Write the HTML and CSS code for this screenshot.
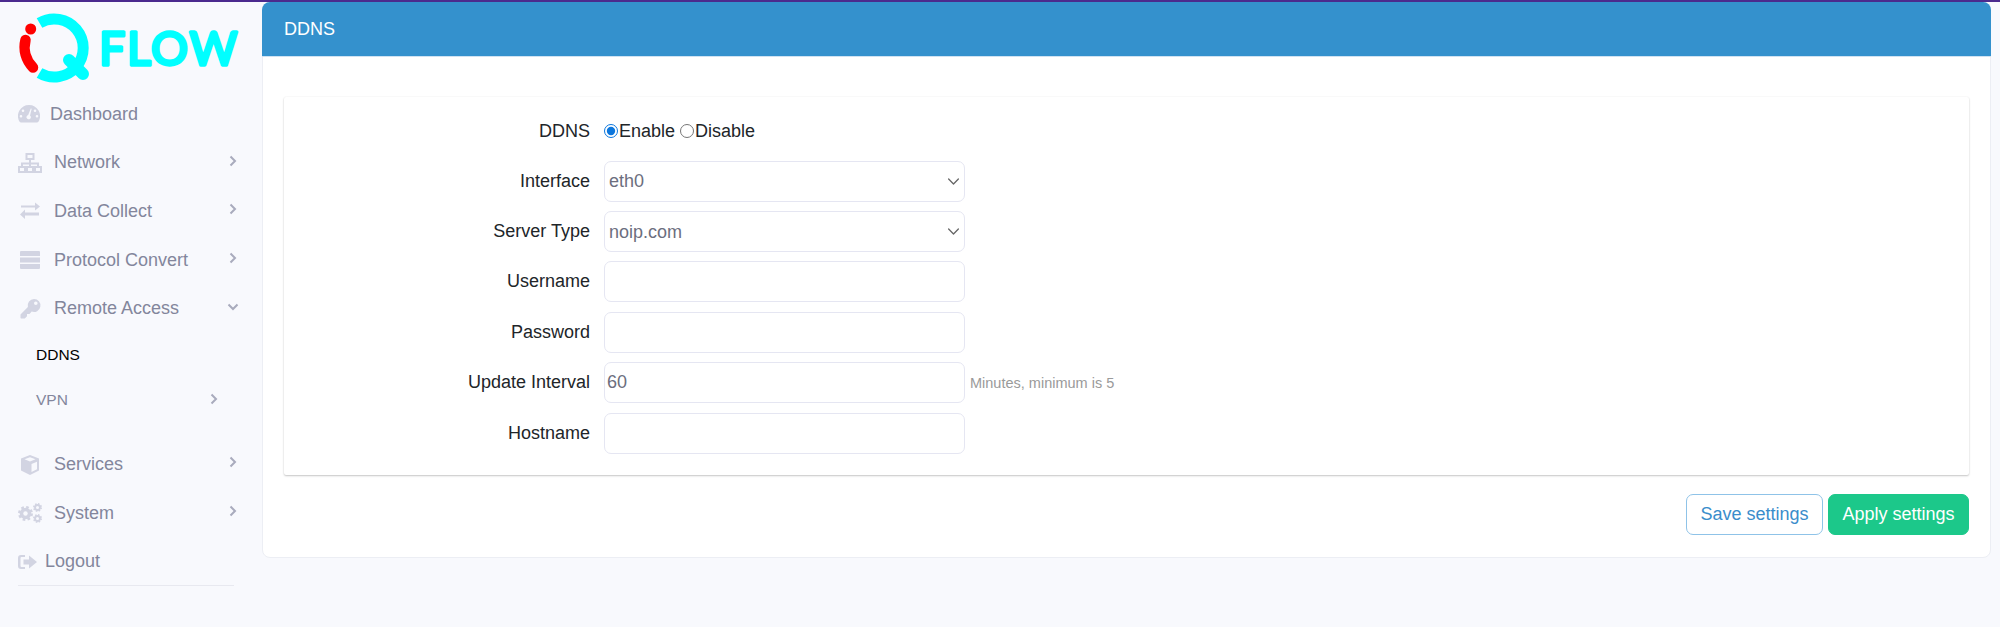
FILE: index.html
```html
<!DOCTYPE html>
<html lang="en">
<head>
<meta charset="utf-8">
<title>DDNS</title>
<link rel="stylesheet" href="styles.css">
</head>
<body>
<div class="app">
  <aside class="sidebar">
    <div class="logo">
      <svg width="262" height="90" viewBox="0 0 262 90">
        <path d="M39.500 23 A29 29 0 1 1 39.500 73" fill="none" stroke="#00ffff" stroke-width="11"/>
        <path d="M69 60 L83 74" fill="none" stroke="#00ffff" stroke-width="12" stroke-linecap="round"/>
        <path d="M25.500 40 A29 29 0 0 0 33 67.500" fill="none" stroke="#ff0000" stroke-width="10.500" stroke-linecap="round"/>
        <circle cx="30.700" cy="29" r="5.500" fill="#ff0000"/>
        <text x="99" y="64.500" class="logo-word">FLOW</text>
      </svg>
    </div>
    <nav class="menu">
      <a class="item item-flat">
        <svg class="ico ico-dash" viewBox="0 0 22 20"><path d="M11 1a11 11 0 0 0-9.400 16.700c.3.500.8.800 1.400.8h16c.6 0 1.100-.3 1.400-.8A11 11 0 0 0 11 1Zm1.800 3.400 .9.300-1.700 6.700a2.200 2.200 0 1 1-1.800-.4ZM5 5.500a1.300 1.300 0 1 1 0 2.600 1.300 1.300 0 0 1 0-2.600ZM3 11a1.300 1.300 0 1 1 0 2.600A1.300 1.300 0 0 1 3 11Zm16 0a1.300 1.300 0 1 1 0 2.600 1.300 1.300 0 0 1 0-2.600Zm-2-5.500a1.300 1.300 0 1 1 0 2.600 1.300 1.300 0 0 1 0-2.600Z" fill-rule="evenodd"/></svg>
        <span class="item-text">Dashboard</span>
      </a>
      <a class="item">
        <svg class="ico" viewBox="0 0 24 20"><path d="M7.500 0h9v7H13v2.500h8V13h3v7h-8v-7h3v-1.500h-6V13h3v7H8v-7h3v-1.500H5V13h3v7H0v-7h3V9.500h8V7H7.500ZM9.500 2v3h5V2ZM2 15v3h4v-3Zm8 0v3h4v-3Zm8 0v3h4v-3Z" fill-rule="evenodd"/></svg>
        <span class="item-text">Network</span>
        <svg class="chev" viewBox="0 0 8 12"><path d="M1.500 1.500 6 6l-4.500 4.500"/></svg>
      </a>
      <a class="item">
        <svg class="ico" viewBox="0 0 24 20"><path d="M3 4.500h14V1.500l5 4-5 4v-3H3ZM21 11.500H7v-3l-5 5 5 4.500v-3.500h14Z"/></svg>
        <span class="item-text">Data Collect</span>
        <svg class="chev" viewBox="0 0 8 12"><path d="M1.500 1.500 6 6l-4.500 4.500"/></svg>
      </a>
      <a class="item">
        <svg class="ico" viewBox="0 0 24 20"><path d="M3 1h18a1 1 0 0 1 1 1v4H2V2a1 1 0 0 1 1-1Zm-1 6.500h20v5H2Zm0 6.500h20v4a1 1 0 0 1-1 1H3a1 1 0 0 1-1-1Z"/></svg>
        <span class="item-text">Protocol Convert</span>
        <svg class="chev" viewBox="0 0 8 12"><path d="M1.500 1.500 6 6l-4.500 4.500"/></svg>
      </a>
      <a class="item">
        <svg class="ico" viewBox="0 0 24 20"><path d="M16 0a6.500 6.500 0 1 1-2.300 12.600L11.500 15H9v2.300L6.800 19.500H3l-.5-.5v-3.500l7.400-7.400A6.500 6.500 0 0 1 16 0Zm1.800 2.500a1.800 1.800 0 1 0 0 3.600 1.800 1.800 0 0 0 0-3.600Z" fill-rule="evenodd"/></svg>
        <span class="item-text">Remote Access</span>
        <svg class="chev chev-down" viewBox="0 0 12 8"><path d="M1.500 1.500 6 6l4.500-4.500"/></svg>
      </a>
      <div class="submenu">
        <a class="sub sub-active"><span>DDNS</span></a>
        <a class="sub"><span>VPN</span><svg class="chev" viewBox="0 0 8 12"><path d="M1.500 1.500 6 6l-4.500 4.500"/></svg></a>
      </div>
      <a class="item">
        <svg class="ico" viewBox="0 0 24 20"><path d="M12 0 21 3.500v12L12 20l-9-4.500v-12Zm0 2.200L6.500 4.300 12 6.500l5.500-2.200ZM13.500 9v8l5.500-2.700V6.800Z" fill-rule="evenodd"/></svg>
        <span class="item-text">Services</span>
        <svg class="chev" viewBox="0 0 8 12"><path d="M1.500 1.500 6 6l-4.500 4.500"/></svg>
      </a>
      <a class="item">
        <svg class="ico" viewBox="0 0 24 20">
          <circle class="gear" cx="7.500" cy="10.500" r="6" stroke-width="3" stroke-dasharray="2.500 2.200"/>
          <circle cx="7.500" cy="10.500" r="5.800"/><circle class="hole" cx="7.500" cy="10.500" r="2.200"/>
          <circle class="gear" cx="19.500" cy="4.500" r="3.600" stroke-width="1.800" stroke-dasharray="1.500 1.330"/>
          <circle cx="19.500" cy="4.500" r="3.400"/><circle class="hole" cx="19.500" cy="4.500" r="1.500"/>
          <circle class="gear" cx="19.500" cy="15.500" r="3.600" stroke-width="1.800" stroke-dasharray="1.500 1.330"/>
          <circle cx="19.500" cy="15.500" r="3.400"/><circle class="hole" cx="19.500" cy="15.500" r="1.500"/>
        </svg>
        <span class="item-text">System</span>
        <svg class="chev" viewBox="0 0 8 12"><path d="M1.500 1.500 6 6l-4.500 4.500"/></svg>
      </a>
      <a class="item item-logout">
        <svg class="ico ico-out" viewBox="0 0 19 16"><path d="M3 1h4v2H3.500a1 1 0 0 0-1 1v8a1 1 0 0 0 1 1H7v2H3a3 3 0 0 1-3-3V4a3 3 0 0 1 3-3Zm8 .5L19 8l-8 6.500v-4H5.500v-5H11Z"/></svg>
        <span class="item-text">Logout</span>
      </a>
      <div class="menu-rule"></div>
    </nav>
  </aside>

  <main class="panel">
    <header class="panel-head">DDNS</header>
    <div class="panel-body">
      <form class="form-card">
        <div class="row row-radio">
          <span class="label">DDNS</span>
          <div class="radios">
            <label class="radio"><input type="radio" name="ddns" checked>Enable</label>
            <label class="radio"><input type="radio" name="ddns">Disable</label>
          </div>
        </div>
        <div class="row">
          <label class="label">Interface</label>
          <select class="field"><option>eth0</option></select>
        </div>
        <div class="row">
          <label class="label">Server Type</label>
          <select class="field"><option>noip.com</option></select>
        </div>
        <div class="row">
          <label class="label">Username</label>
          <input class="field" type="text">
        </div>
        <div class="row">
          <label class="label">Password</label>
          <input class="field" type="password">
        </div>
        <div class="row">
          <label class="label">Update Interval</label>
          <input class="field" type="text" value="60">
          <span class="hint">Minutes, minimum is 5</span>
        </div>
        <div class="row">
          <label class="label">Hostname</label>
          <input class="field" type="text">
        </div>
      </form>
      <div class="actions">
        <button class="btn btn-save" type="button">Save settings</button>
        <button class="btn btn-apply" type="button">Apply settings</button>
      </div>
    </div>
  </main>
</div>
</body>
</html>
```

FILE: styles.css
```css
* { box-sizing: border-box; }
html, body { margin: 0; height: 100%; }
body {
  background: #f8f9fd;
  font-family: "Liberation Sans", Arial, sans-serif;
  border-top: 2px solid #4b2a8e;
  overflow: hidden;
}
.app { display: flex; align-items: flex-start; }

.sidebar { width: 262px; flex: none; }
.logo { height: 90px; }
.logo svg { display: block; margin-top: -2px; }
.logo-word { font-family: Lato, sans-serif; font-weight: 400; font-size: 46px; fill: #00ffff; stroke: #00ffff; stroke-width: 3.400px; stroke-linejoin: round; stroke-linecap: round; letter-spacing: 2px; }

.menu { display: flex; flex-direction: column; }
.item { display: flex; align-items: center; height: 48.600px; padding-left: 18px; color: #83869c; font-size: 18px; position: relative; }
.ico { width: 24px; height: 20px; fill: #d2d4e2; flex: none; margin-right: 12px; }
.ico .hole { fill: #f8f9fd; }
.ico .gear { fill: none; stroke: #d2d4e2; }
.ico-dash { width: 22px; margin-right: 10px; }
.ico-out { width: 19px; height: 16px; margin-right: 8px; }
.chev { width: 8px; height: 12px; fill: none; stroke: #a9abbd; stroke-width: 2; position: absolute; left: 229px; top: 16px; }
.chev-down { width: 12px; height: 8px; left: 227px; top: 19px; }
.submenu { display: flex; flex-direction: column; height: 107.400px; }
.sub { display: flex; align-items: center; height: 44.500px; padding-left: 36px; font-size: 15.500px; color: #83869c; position: relative; }
.sub-active { color: #000; }
.sub .chev { left: 210px; top: 16px; }
.menu-rule { margin: -1px 0 0 18px; width: 216px; height: 1px; background: #e8e9f0; }

.panel { width: 1729px; background: #fff; border: 1px solid #eceef4; border-radius: 8px; height: 556px; }
.panel-head { height: 55px; margin: -1px -1px 0; background: #3491cd; border-bottom: 1px solid #cfe2f2; border-radius: 8px 8px 0 0; color: #fff; font-size: 18px; display: flex; align-items: center; padding-left: 22px; }
.panel-body { padding: 40px 21px 0 21px; }
.form-card { height: 378px; background: #fff; box-shadow: 0 1px 2px rgba(0, 0, 0, .22), 0 0 2px rgba(0, 0, 0, .06); padding-top: 9px; border-radius: 2px; }
.row { display: flex; align-items: center; height: 50.400px; }
.row-radio { height: 50px; }
.label { width: 320px; text-align: right; padding-right: 14px; font-size: 18px; color: #212529; flex: none; }
.radios { display: flex; gap: 5px; font-size: 18px; color: #212529; }
.radio { display: flex; align-items: center; }
.radio input { margin: 0 1px 0 0; width: 14px; height: 14px; accent-color: #0b76dc; }
.field { width: 361px; height: 41px; border: 1px solid #e5e6f2; border-radius: 7px; background-color: #fff; font: 18px "Liberation Sans", Arial, sans-serif; color: #6c6e7e; padding: 0 2px; outline: none; }
select.field { appearance: none; padding-left: 4px; background-image: url("data:image/svg+xml,%3Csvg xmlns='http://www.w3.org/2000/svg' viewBox='0 0 16 16'%3E%3Cpath fill='none' stroke='%23666' stroke-width='1.600' stroke-linecap='round' stroke-linejoin='round' d='M2 5l6 6 6-6'/%3E%3C/svg%3E"); background-repeat: no-repeat; background-position: right 4px center; background-size: 13px 13px; }
.hint { margin-left: 5px; font-size: 14.500px; color: #9a9a9a; }
.actions { display: flex; justify-content: flex-end; gap: 5px; margin-top: 19px; }
.btn { height: 41px; border-radius: 7px; font: 18px "Liberation Sans", Arial, sans-serif; padding: 0; }
.btn-save { width: 137px; background: #fff; border: 1px solid #8fc3e8; color: #3a8dcb; }
.btn-apply { width: 141px; background: #1cc88a; border: 1px solid #1cc88a; color: #fff; }
```
